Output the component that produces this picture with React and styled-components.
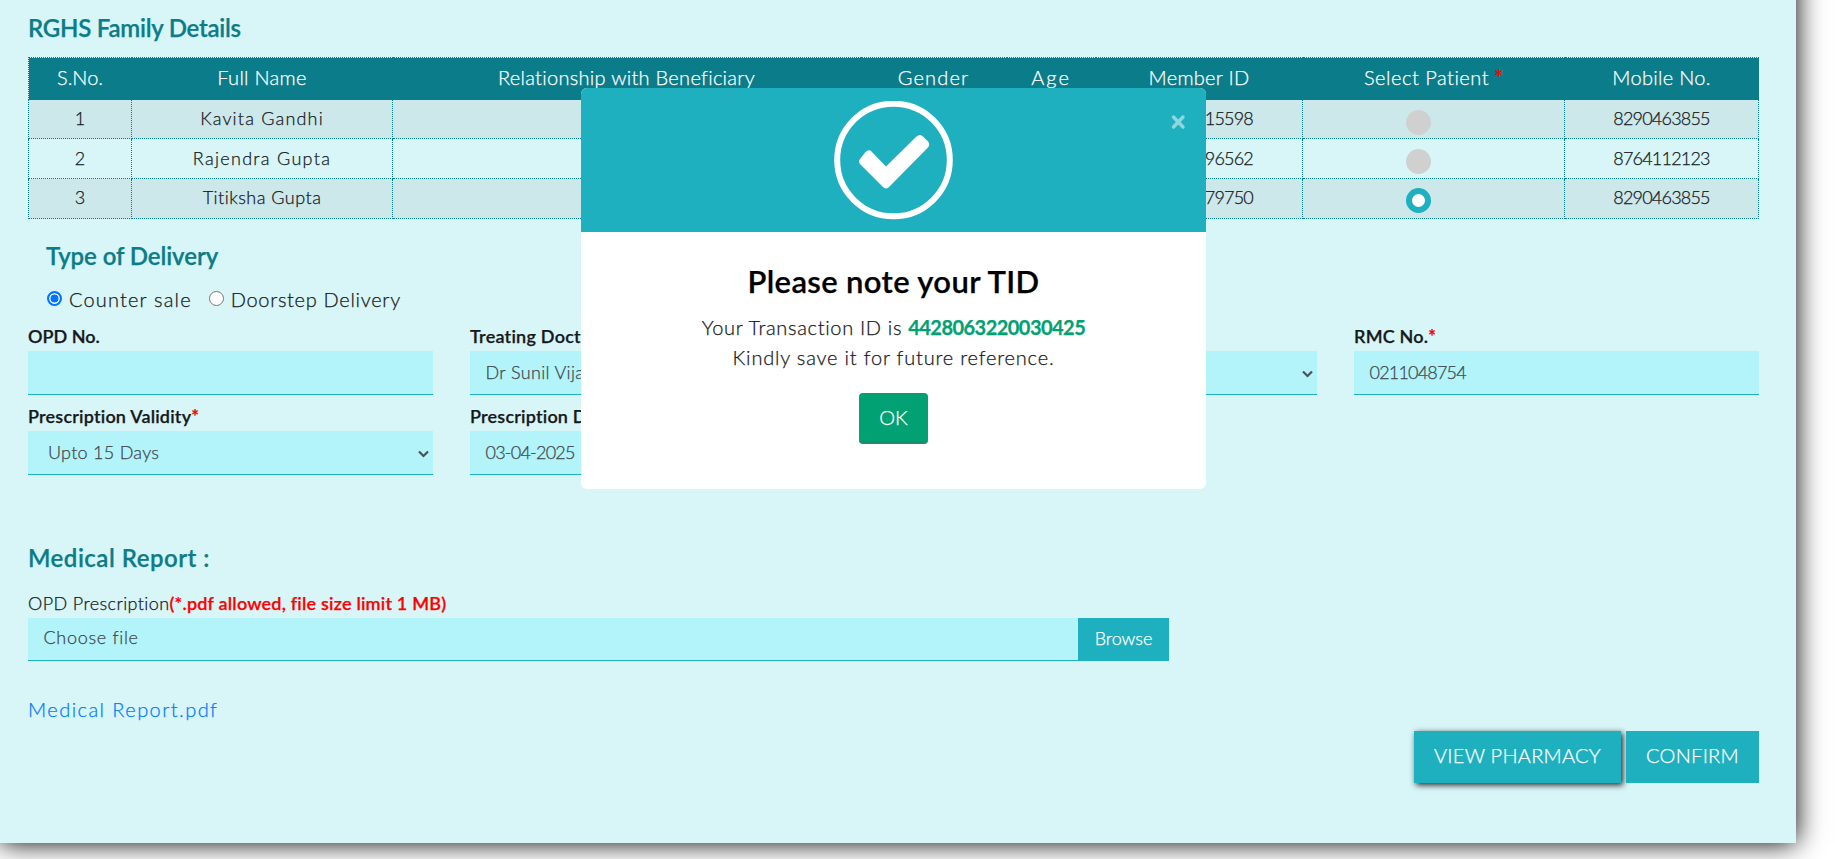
import React from "react";
import styled, { createGlobalStyle, css } from "styled-components";

const GlobalStyle = createGlobalStyle`
  *, *::before, *::after { box-sizing: border-box; }
  html, body { margin: 0; background: #fff; overflow: hidden; }
  body {
    font-family: Lato, "Liberation Sans", sans-serif;
    font-size: 18px;
    font-weight: 300;
    -webkit-text-stroke: 0.25px currentColor;
    color: #16191c;
    white-space: nowrap;
  }
`;

const TEAL = "#1fb0c0";
const DARK_TEAL = "#0b7c89";

const Viewport = styled.div`
  position: relative;
  height: 859px;
  overflow: hidden;
`;

const Panel = styled.main`
  width: 1796px;
  height: 883px;
  margin-top: -40px;
  padding: 40px 37px 0 28px;
  background: #d8f5f7;
  box-shadow: 0 0 26px #000;
`;

const Spaced = styled.span`
  letter-spacing: ${(p) => p.$ls || 0}px;
`;

const SectionTitle = styled.h2`
  margin: 0;
  height: ${(p) => p.$height}px;
  padding-top: ${(p) => p.$top}px;
  padding-left: ${(p) => p.$indent || 0}px;
  font-size: 24px;
  line-height: 30px;
  font-weight: 600;
  color: ${DARK_TEAL};
  letter-spacing: ${(p) => p.$ls}px;
`;

const FamilyTable = styled.table`
  width: 1730px;
  table-layout: fixed;
  border-collapse: collapse;
  text-align: center;
`;

const dottedCell = css`
  padding: 0 0 ${(p) => p.$lift || 2}px;
  border: 1px dotted ${DARK_TEAL};
`;

const HeadCell = styled.th`
  ${dottedCell}
  height: 42px;
  padding-bottom: 4px;
  font-size: 20px;
  font-weight: 300;
  color: #fff;
`;

const HeadRow = styled.tr`
  background: ${DARK_TEAL};
`;

const Row = styled.tr`
  height: ${(p) => p.$height}px;
  background: ${(p) => (p.$striped ? "#cde8ea" : "transparent")};
`;

const Cell = styled.td`
  ${dottedCell}
  line-height: 22px;
`;

const MemberCell = styled(Cell)`
  text-align: right;
  padding-right: 49px;
`;

const Required = styled.span`
  color: #f00;
  font-weight: 700;
`;

const PatientDot = styled.span`
  display: block;
  width: 25px;
  height: 25px;
  margin: 8px 0 0 103px;
  border-radius: 50%;
  background: ${(p) => (p.$checked ? "#fff" : "#d0d0d0")};
  border: ${(p) => (p.$checked ? `6.5px solid ${TEAL}` : "0")};
`;

const DeliveryOptions = styled.div`
  display: flex;
  align-items: center;
  height: 28px;
  margin-bottom: 2px;
  padding-left: 19px;
  font-size: 20px;
`;

const Option = styled.label`
  display: flex;
  align-items: center;
  gap: 7px;
  margin-right: 17px;
`;

const RadioMark = styled.span`
  width: 15px;
  height: 15px;
  margin-top: -1px;
  border-radius: 50%;
  border: ${(p) => (p.$checked ? "2px solid #0075ff" : "1px solid #767676")};
  background: ${(p) => (p.$checked ? "#0075ff" : "#fff")};
  box-shadow: ${(p) => (p.$checked ? "inset 0 0 0 1.5px #fff" : "none")};
`;

const FieldGrid = styled.div`
  display: grid;
  grid-template-columns: repeat(4, 405px);
  column-gap: 37px;
`;

const Field = styled.div`
  height: 80px;
`;

const Label = styled.div`
  height: 36px;
  padding-top: 9px;
  line-height: 24px;
  font-weight: ${(p) => (p.$regular ? 300 : 600)};
  letter-spacing: ${(p) => p.$ls || 0}px;
`;

const Control = styled.div`
  display: flex;
  align-items: center;
  justify-content: space-between;
  height: 44px;
  padding: 0 3px 2px ${(p) => p.$indent || 15.5}px;
  border-bottom: 1px solid ${TEAL};
  background: #b2f4fa;
  color: #40474d;
  letter-spacing: ${(p) => p.$ls || 0}px;
`;

const ChevronIcon = styled.svg`
  width: 13px;
  height: 10px;
  margin-top: 4px;
`;

const Chevron = () => (
  <ChevronIcon viewBox="0 0 13 10">
    <path d="M2 2.500 L6.500 7 L11 2.500" fill="none" stroke="#495057" strokeWidth="2.200" />
  </ChevronIcon>
);

const FileLabel = styled(Label)`
  height: 27px;
  padding-top: 0;
  b { color: #f00; font-weight: 600; letter-spacing: 0.2px; }
`;

const FilePicker = styled.div`
  display: flex;
  width: 1141px;
`;

const FileName = styled(Control)`
  flex: 1;
  height: 43px;
  padding-bottom: 4px;
`;

const BrowseButton = styled.div`
  width: 91px;
  height: 43px;
  line-height: 40px;
  text-align: center;
  background: ${TEAL};
  color: #fff;
`;

const ReportLink = styled.a`
  display: block;
  margin-top: 36px;
  height: 34px;
  line-height: 24px;
  font-size: 20px;
  letter-spacing: 1.45px;
  color: #007bff;
`;

const Actions = styled.div`
  display: flex;
  justify-content: flex-end;
  gap: 5px;
  font-size: 20px;
  letter-spacing: 0.27px;
`;

const ActionButton = styled.div`
  width: ${(p) => p.$width}px;
  height: 52px;
  line-height: 49px;
  text-align: center;
  background: ${TEAL};
  color: #fff;
  box-shadow: ${(p) => (p.$raised ? "2px 2px 6px #222" : "none")};
`;

const Modal = styled.section`
  position: absolute;
  left: 581px;
  top: 88px;
  width: 625px;
  height: 401px;
  border-radius: 6px;
  overflow: hidden;
  background: #fff;
  text-align: center;
`;

const ModalHeader = styled.header`
  display: flex;
  justify-content: center;
  height: 144px;
  padding-top: 13px;
  background: ${TEAL};
`;

const CloseIcon = styled.svg`
  position: absolute;
  right: 20px;
  top: 26px;
`;

const ModalTitle = styled.h1`
  margin: 30px 0 0;
  font-size: 31px;
  line-height: 38px;
  font-weight: 600;
  letter-spacing: 0.35px;
  color: #000;
`;

const ModalText = styled.p`
  margin: 12px 0 0;
  font-size: 20px;
  line-height: 30px;
  b { color: #02a174; font-weight: 700; letter-spacing: -0.54px; }
`;

const OkButton = styled.div`
  width: 69px;
  height: 51px;
  margin: 21px auto 0;
  border-radius: 4px;
  border-bottom: 3px solid #1f8b72;
  background: #02a174;
  color: #fff;
  font-size: 20px;
  line-height: 49px;
`;

const COLUMNS = [103, 261, 468, 146, 89, 207, 262, 194];

const HEADINGS = [
  ["S.No.", 0],
  ["Full Name", 0.29],
  ["Relationship with Beneficiary", 0.29],
  ["Gender", 1.2],
  ["Age", 2],
  ["Member ID", 0.28],
  ["Select Patient", 0.52, true],
  ["Mobile No.", 0.29],
];

const MEMBERS = [
  { name: "Kavita Gandhi", ls: 1.19, id: "15598", mobile: "8290463855", height: 39 },
  { name: "Rajendra Gupta", ls: 1.3, id: "96562", mobile: "8764112123", height: 40 },
  { name: "Titiksha Gupta", ls: 0.48, id: "79750", mobile: "8290463855", height: 40, selected: true },
];

const Star = () => <Required>*</Required>;

export default function App() {
  return (
    <Viewport>
      <GlobalStyle />
      <Panel>
        <SectionTitle $top={13} $height={57} $ls={-0.24}>RGHS Family Details</SectionTitle>
        <FamilyTable>
          <colgroup>
            {COLUMNS.map((width, i) => <col key={i} width={width} />)}
          </colgroup>
          <thead>
            <HeadRow>
              {HEADINGS.map(([text, ls, required]) => (
                <HeadCell key={text}>
                  <Spaced $ls={ls}>{text}</Spaced>{required && <> <Star /></>}
                </HeadCell>
              ))}
            </HeadRow>
          </thead>
          <tbody>
            {MEMBERS.map((m, i) => {
              const lift = m.selected ? 4 : 2;
              return (
                <Row key={m.name} $height={m.height} $striped={i % 2 === 0}>
                  <Cell $lift={lift}>{i + 1}</Cell>
                  <Cell $lift={lift}><Spaced $ls={m.ls}>{m.name}</Spaced></Cell>
                  <Cell />
                  <Cell />
                  <Cell />
                  <MemberCell $lift={lift}><Spaced $ls={-0.8}>{m.id}</Spaced></MemberCell>
                  <Cell $lift={lift}><PatientDot $checked={m.selected} /></Cell>
                  <Cell $lift={lift}><Spaced $ls={-0.8}>{m.mobile}</Spaced></Cell>
                </Row>
              );
            })}
          </tbody>
        </FamilyTable>

        <SectionTitle $top={22} $height={66} $indent={18} $ls={-0.08}>Type of Delivery</SectionTitle>
        <DeliveryOptions>
          <Option><RadioMark $checked /><Spaced $ls={1.17}>Counter sale</Spaced></Option>
          <Option><RadioMark /><Spaced $ls={0.7}>Doorstep Delivery</Spaced></Option>
        </DeliveryOptions>

        <FieldGrid>
          <Field>
            <Label>OPD No.</Label>
            <Control />
          </Field>
          <Field>
            <Label $ls={0.24}>Treating Doctor</Label>
            <Control $ls={0.35}>Dr Sunil Vijay</Control>
          </Field>
          <Field>
            <Label />
            <Control><span /><Chevron /></Control>
          </Field>
          <Field>
            <Label $ls={0.2}>RMC No.<Star /></Label>
            <Control $ls={-0.8}>0211048754</Control>
          </Field>
          <Field>
            <Label $ls={0.2}>Prescription Validity<Star /></Label>
            <Control $indent={20} $ls={0.27}>Upto 15 Days<Chevron /></Control>
          </Field>
          <Field>
            <Label $ls={0.2}>Prescription Date</Label>
            <Control $ls={-0.77}>03-04-2025</Control>
          </Field>
        </FieldGrid>

        <SectionTitle $top={68} $height={116} $ls={0.5}>Medical Report :</SectionTitle>
        <FileLabel $regular $ls={0.4}>
          OPD Prescription<b>(*.pdf allowed, file size limit 1 MB)</b>
        </FileLabel>
        <FilePicker>
          <FileName $ls={0.69}>Choose file</FileName>
          <BrowseButton>Browse</BrowseButton>
        </FilePicker>
        <ReportLink>Medical Report.pdf</ReportLink>
        <Actions>
          <ActionButton $width={207} $raised>VIEW PHARMACY</ActionButton>
          <ActionButton $width={133}>CONFIRM</ActionButton>
        </Actions>
      </Panel>

      <Modal>
        <ModalHeader>
          <svg width="119" height="119" viewBox="0 0 119 119">
            <circle cx="59.5" cy="59" r="56.300" fill="none" stroke="#fff" strokeWidth="6" />
            <path
              d="M37 50 L52 65.500 L82.500 35.500 Q86 32.500 89 35.500 L94 40.500 Q96.500 43.500 94 46.500 L54.500 86.500 Q52 88.500 49.500 86.500 L26 63 Q24 60.500 26 58 L31.500 51 Q34.500 48 37 50 Z"
              fill="#fff"
            />
          </svg>
          <CloseIcon width="15" height="16" viewBox="0 0 15 16">
            <path d="M2.500 3 L12 13 M12 3 L2.500 13" stroke="#8fd7df" strokeWidth="3.400" strokeLinecap="round" />
          </CloseIcon>
        </ModalHeader>
        <ModalTitle>Please note your TID</ModalTitle>
        <ModalText>
          <Spaced $ls={0.68}>Your Transaction ID is </Spaced><b>4428063220030425</b>
          <br />
          <Spaced $ls={0.81}>Kindly save it for future reference.</Spaced>
        </ModalText>
        <OkButton>OK</OkButton>
      </Modal>
    </Viewport>
  );
}
